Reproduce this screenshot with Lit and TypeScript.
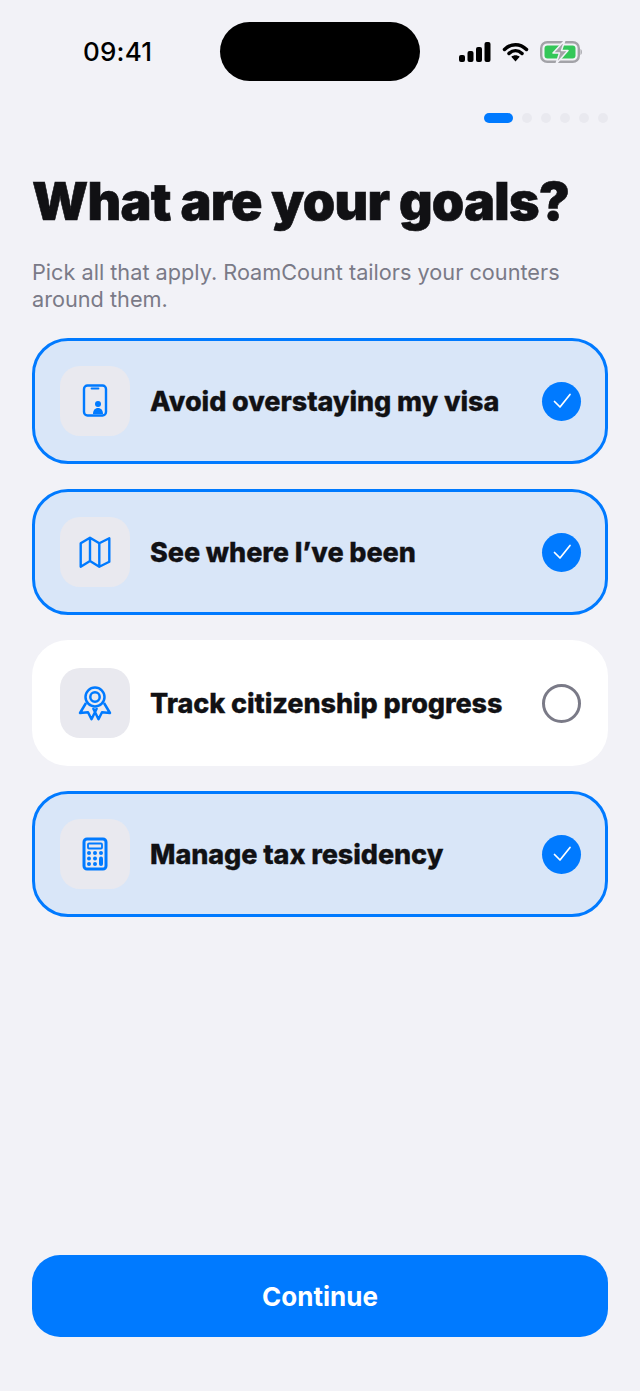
import { css, html, LitElement, svg } from 'lit';
import { customElement, state } from 'lit/decorators.js';

const ICONS = {
  phone: svg`
    <rect x="7" y="2.500" width="22" height="30" rx="3.500" fill="none" stroke="currentColor" stroke-width="2.400" />
    <path d="M14.500 5.500h7" stroke="currentColor" stroke-width="1.800" stroke-linecap="round" />
    <circle cx="21" cy="21" r="3" fill="currentColor" />
    <path d="M16 31c0-3.800 2-6 5-6s5 2.200 5 6z" fill="currentColor" />`,
  map: svg`
    <path d="M3.700 9.300 13 3.700l9.300 5.600 10-5v23.400l-10 5L13 27l-9.300 5.700z M13 3.700V27 M22.300 9.300v23.400"
      fill="none" stroke="currentColor" stroke-width="2.400" stroke-linejoin="round" />`,
  medal: svg`
    <circle cx="18" cy="12" r="9.500" fill="none" stroke="currentColor" stroke-width="2.500" />
    <circle cx="18" cy="12" r="4.700" fill="none" stroke="currentColor" stroke-width="2.500" />
    <path d="M9 18 3 28l8-.8 3.500 7L20 23 M27 18l6 10-8-.8-3.500 7L16 23" fill="none" stroke="currentColor"
      stroke-width="2.500" stroke-linejoin="round" />`,
  calc: svg`
    <rect x="7" y="3" width="22" height="30" rx="3" fill="none" stroke="currentColor" stroke-width="3" />
    <rect x="11" y="7.500" width="14" height="5" rx="1" fill="none" stroke="currentColor" stroke-width="1.800" />
    <g fill="currentColor">
      <circle cx="12" cy="17" r="2" /><circle cx="18" cy="17" r="2" /><circle cx="24" cy="17" r="2" />
      <circle cx="12" cy="22.500" r="2" /><circle cx="18" cy="22.500" r="2" />
      <circle cx="12" cy="28" r="2" /><circle cx="18" cy="28" r="2" />
      <rect x="22" y="20.500" width="4" height="9.500" rx="2" />
    </g>`,
};

type Goal = { id: string; label: string; icon: keyof typeof ICONS };

const GOALS: Goal[] = [
  { id: 'visa', label: 'Avoid overstaying my visa', icon: 'phone' },
  { id: 'map', label: 'See where I’ve been', icon: 'map' },
  { id: 'citizen', label: 'Track citizenship progress', icon: 'medal' },
  { id: 'tax', label: 'Manage tax residency', icon: 'calc' },
];

@customElement('app-root')
class AppRoot extends LitElement {
  static styles = css`
    :host {
      display: flex;
      flex-direction: column;
      height: 1391px;
      box-sizing: border-box;
      padding: 0 32px 54px;
      background: #f2f2f7;
      color: #111114;
      font-family: Inter, 'Liberation Sans', sans-serif;
    }

    .status {
      display: grid;
      grid-template-columns: 188px 200px 1fr;
      align-items: center;
      height: 59px;
      margin-top: 22px;
    }

    .time {
      padding-left: 51px;
      font-size: 26px;
      font-weight: 500;
      letter-spacing: 0.2px;
      color: #000;
    }

    .island {
      height: 59px;
      border-radius: 30px;
      background: #000;
    }

    .indicators {
      display: flex;
      align-items: center;
      gap: 11px;
      padding-left: 39px;
    }

    .dots {
      display: flex;
      justify-content: flex-end;
      gap: 9px;
      margin-top: 32px;
    }

    .dots span {
      width: 10px;
      height: 10px;
      border-radius: 5px;
      background: #e9e9ef;
    }

    .dots .active {
      width: 29px;
      background: #007aff;
    }

    h1 {
      margin: 48px 0 0;
      font-size: 52px;
      line-height: 62px;
      font-weight: 900;
      letter-spacing: -0.75px;
      -webkit-text-stroke: 0.6px #111114;
      white-space: nowrap;
    }

    .sub {
      margin: 26px 0 0;
      font-size: 21.7px;
      line-height: 27px;
      color: #7a7a87;
    }

    .goals {
      display: flex;
      flex-direction: column;
      gap: 25px;
      margin-top: 25px;
    }

    .goal {
      display: flex;
      align-items: center;
      height: 126px;
      box-sizing: border-box;
      padding: 0 27px 0 28px;
      border-radius: 36px;
      background: #fff;
    }

    .goal.on {
      padding: 0 24px 0 25px;
      border: 3px solid #007aff;
      background: #d9e6f8;
    }

    .tile {
      display: grid;
      place-items: center;
      flex: none;
      width: 70px;
      height: 70px;
      border-radius: 20px;
      background: #e9e9ef;
      color: #007aff;
    }

    .label {
      flex: 1;
      margin-left: 20px;
      font-size: 27px;
      font-weight: 800;
      letter-spacing: -0.08px;
      -webkit-text-stroke: 0.3px #111114;
      white-space: nowrap;
    }

    .check {
      display: grid;
      place-items: center;
      flex: none;
      width: 39px;
      height: 39px;
      box-sizing: border-box;
      border-radius: 50%;
      border: 3px solid #7a7a87;
    }

    .on .check {
      border: none;
      background: #007aff;
    }

    .continue {
      margin-top: auto;
      height: 82px;
      border: none;
      border-radius: 28px;
      background: #007aff;
      color: #fff;
      font: 700 26px Inter, 'Liberation Sans', sans-serif;
    }
  `;

  @state()
  private selected = new Set(['visa', 'map', 'tax']);

  private toggle(id: string) {
    const next = new Set(this.selected);
    next.has(id) ? next.delete(id) : next.add(id);
    this.selected = next;
  }

  private renderIndicators() {
    return html`
      <svg width="32" height="20" viewBox="0 0 32 20">
        <rect x="0" y="13" width="6" height="7" rx="2" fill="#000" />
        <rect x="8.500" y="9" width="6" height="11" rx="2" fill="#000" />
        <rect x="17" y="5" width="6" height="15" rx="2" fill="#000" />
        <rect x="25.500" y="0" width="6" height="20" rx="2" fill="#000" />
      </svg>
      <svg width="27" height="20" viewBox="0 0 26 20">
        <path d="M2 7.500C8.500 1 17.500 1 24 7.500" fill="none" stroke="#000" stroke-width="3.500" stroke-linecap="round" />
        <path d="M6.500 11.500c4-3.700 9-3.700 13 0" fill="none" stroke="#000" stroke-width="3.500" stroke-linecap="round" />
        <path d="M8.800 14.700 13 19.500l4.200-4.800c-2.400-2-6-2-8.400 0z" fill="#000" />
      </svg>
      <svg width="44" height="24" viewBox="0 0 44 24">
        <rect x="1.200" y="2.200" width="37.600" height="19.600" rx="6" fill="none" stroke="#a3a3a8" stroke-width="2.400" />
        <rect x="4.500" y="5.500" width="31" height="13" rx="3" fill="#34c759" />
        <path d="M40.500 9c1.800.5 1.800 5.500 0 6z" fill="#a3a3a8" />
        <path d="M25 0 13 13h6.500L16 24 28 10.500h-6.500z" fill="#a3a3a8" stroke="#f2f2f7" stroke-width="1.500" stroke-linejoin="round" />
      </svg>
    `;
  }

  protected render(): unknown {
    return html`
      <div class="status">
        <span class="time">09:41</span>
        <div class="island"></div>
        <div class="indicators">${this.renderIndicators()}</div>
      </div>

      <div class="dots">
        <span class="active"></span><span></span><span></span><span></span><span></span><span></span>
      </div>

      <h1>What are your goals?</h1>
      <p class="sub">Pick all that apply. RoamCount tailors your counters around them.</p>

      <div class="goals">
        ${GOALS.map((goal) => {
          const on = this.selected.has(goal.id);
          return html`
            <div class="goal ${on ? 'on' : ''}" @click=${() => this.toggle(goal.id)}>
              <div class="tile">
                <svg width="36" height="36" viewBox="0 0 36 36">${ICONS[goal.icon]}</svg>
              </div>
              <span class="label">${goal.label}</span>
              <div class="check">
                ${on
                  ? html`<svg width="20" height="20" viewBox="0 0 20 20">
                      <path d="M2.500 10.500 8 16 18 3.500" fill="none" stroke="#fff" stroke-width="1.700" stroke-linecap="round" stroke-linejoin="round" />
                    </svg>`
                  : ''}
              </div>
            </div>
          `;
        })}
      </div>

      <button class="continue">Continue</button>
    `;
  }
}
